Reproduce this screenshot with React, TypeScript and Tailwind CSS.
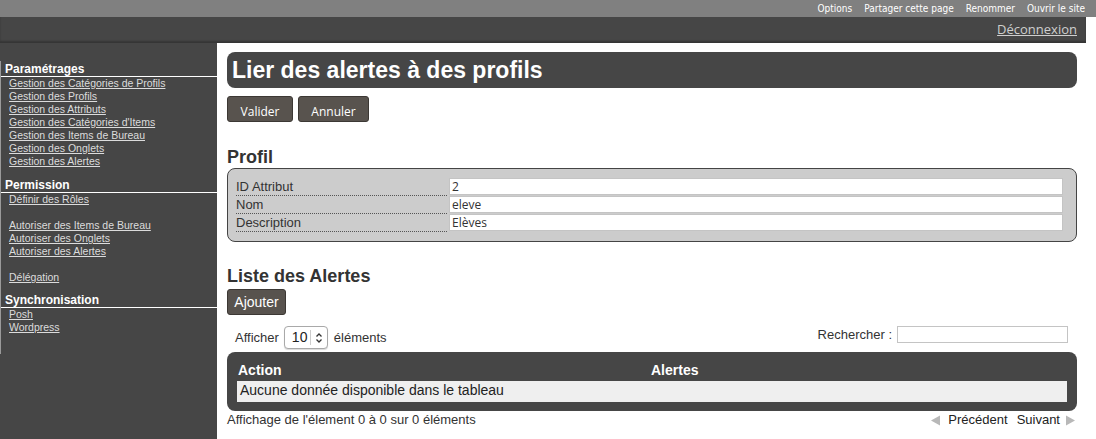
import React from 'react'

const topLinks = ['Options', 'Partager cette page', 'Renommer', 'Ouvrir le site']

const menu = [
  {
    title: 'Paramétrages',
    links: [
      'Gestion des Catégories de Profils',
      'Gestion des Profils',
      'Gestion des Attributs',
      "Gestion des Catégories d'Items",
      'Gestion des Items de Bureau',
      'Gestion des Onglets',
      'Gestion des Alertes',
    ],
  },
  {
    title: 'Permission',
    links: ['Définir des Rôles', '', 'Autoriser des Items de Bureau', 'Autoriser des Onglets', 'Autoriser des Alertes', '', 'Délégation'],
  },
  { title: 'Synchronisation', links: ['Posh', 'Wordpress'] },
]

const fields = [
  { label: 'ID Attribut', value: '2' },
  { label: 'Nom', value: 'eleve' },
  { label: 'Description', value: 'Elèves' },
]

const arial = "font-['Liberation_Sans',Arial,sans-serif]"
const open = "font-['Open_Sans','DejaVu_Sans',sans-serif]"

const Sidebar = () => (
  <div className="w-[217px] shrink-0 bg-[#464646] pt-[18px]">
    <div className={`border-l border-[#9a9a9a] pb-[20px] ${arial}`}>
      {menu.map((section, i) => (
        <div key={section.title} className={i === 0 ? '' : i === 1 ? 'mt-[9px]' : 'mt-[8px]'}>
          <div className="h-[16px] border-b border-white pl-[4px] text-[12px] font-bold leading-[17px] text-white">
            {section.title}
          </div>
          {section.links.map((link, j) => (
            <div key={j} className="h-[13px] pl-[8px] text-[10.5px] leading-[13px] text-[#dcdcdc]">
              {link && <a className="cursor-pointer underline">{link}</a>}
            </div>
          ))}
        </div>
      ))}
    </div>
  </div>
)

const Button = ({ label, w }: { label: string; w: string }) => (
  <button
    className={`${w} h-[26px] rounded-[3px] border border-[#3c3834] bg-[#58534e] pt-[6px] text-[12px] leading-[16px] text-white ${open}`}
  >
    {label}
  </button>
)

const App = () => {
  return (
    <div className={`min-h-[439px] bg-white text-[#333] ${arial}`}>
      <div className={`flex h-[17px] items-center justify-end gap-[12px] bg-[#808080] pr-[11px] text-[10px] text-white ${"font-['Liberation_Sans_Narrow','DejaVu_Sans_Condensed','Liberation_Sans',sans-serif]"}`}>
        {topLinks.map((l) => (
          <span key={l}>{l}</span>
        ))}
      </div>
      <div className="w-[1086px]">
        <div className="flex h-[26px] items-center justify-end bg-[#464646] pr-[9px] shadow-[inset_0_-2px_2px_rgba(0,0,0,0.25)]">
          <a className={`cursor-pointer text-[13px] text-[#cfcfcf] underline ${open}`}>Déconnexion</a>
        </div>
        <div className="flex min-h-[396px]">
          <Sidebar />
          <div className="flex-1 pl-[10px] pr-[9px]">
            <div className="mt-[9px] flex h-[36px] items-center rounded-[8px] bg-[#464646] px-[5px]">
              <h1 className="text-[23px] font-bold leading-none text-white">Lier des alertes à des profils</h1>
            </div>
            <div className="mt-[8px] flex gap-[5px]">
              <Button label="Valider" w="w-[66px]" />
              <Button label="Annuler" w="w-[71px]" />
            </div>

            <h2 className="mt-[24px] h-[22px] text-[18px] font-bold leading-[22px]">Profil</h2>
            <div className="rounded-[8px] border border-[#444] bg-[#cccccc] pb-[9px] pl-[8px] pr-[13px] pt-[9px]">
              {fields.map((f) => (
                <div key={f.label} className="flex h-[18px]">
                  <div className="w-[211px] border-b border-dotted border-[#555] text-[13px] leading-[18px] text-[#333]">
                    {f.label}
                  </div>
                  <div
                    className={`ml-[2px] h-[17px] flex-1 border border-[#c4c4c4] bg-white pl-[2px] text-[12px] leading-[16px] text-[#333] ${open}`}
                  >
                    {f.value}
                  </div>
                </div>
              ))}
            </div>

            <h2 className="mt-[23px] h-[22px] text-[18px] font-bold leading-[22px]">Liste des Alertes</h2>
            <button className="mt-[2px] h-[26px] w-[59px] rounded-[3px] border border-[#3c3834] bg-[#58534e] text-[14px] text-white">
              Ajouter
            </button>

            <div className="mt-[10px] flex h-[25px] items-start justify-between pl-[8px] pr-[9px] text-[13px]">
              <div className="flex items-center pt-[1px]">
                <span>Afficher</span>
                <div className="ml-[5px] flex h-[23px] w-[44px] items-center rounded-[4px] border border-[#a9a9a9] bg-white shadow-[0_1px_1px_rgba(0,0,0,0.15)]">
                  <span className="pl-[7px] text-[14px] text-[#222]">10</span>
                  <span className="ml-[3px] h-[15px] border-l border-[#ccc]" />
                  <svg width="12" height="12" viewBox="0 0 12 12" className="ml-[2px]">
                    <path d="M3.5 4.5 L6 2 L8.5 4.5 M3.5 7.5 L6 10 L8.5 7.5" fill="none" stroke="#333" strokeWidth="1.3" />
                  </svg>
                </div>
                <span className="ml-[6px]">éléments</span>
              </div>
              <div className="flex items-center">
                <span>Rechercher :</span>
                <div className="ml-[5px] h-[17px] w-[171px] border border-[#c4c4c4] bg-white" />
              </div>
            </div>

            <div className="mt-[2px] rounded-[8px] bg-[#464646] px-[10px] pb-[9px] pt-[10px]">
              <div className="flex h-[19px] text-[14px] font-bold leading-[16px] text-white">
                <div className="w-[414px] pl-[1px]">Action</div>
                <div>Alertes</div>
              </div>
              <div className="h-[21px] bg-[#efefef] pl-[3px] text-[14px] leading-[19px] text-[#222]">
                Aucune donnée disponible dans le tableau
              </div>
            </div>

            <div className="flex h-[18px] items-center justify-between text-[13px] text-[#333]">
              <span>Affichage de l'élement 0 à 0 sur 0 éléments</span>
              <div className="flex items-center pr-[1px] text-[13px] text-[#222]">
                <svg width="11" height="11" viewBox="0 0 11 11">
                  <path d="M10 0.5 L10 10.5 L1 5.5 Z" fill="#b8b8b8" />
                </svg>
                <span className="ml-[7px]">Précédent</span>
                <span className="ml-[9px]">Suivant</span>
                <svg width="11" height="11" viewBox="0 0 11 11" className="ml-[5px]">
                  <path d="M1 0.5 L1 10.5 L10 5.5 Z" fill="#b8b8b8" />
                </svg>
              </div>
            </div>
          </div>
        </div>
      </div>
    </div>
  )
}

export default App
